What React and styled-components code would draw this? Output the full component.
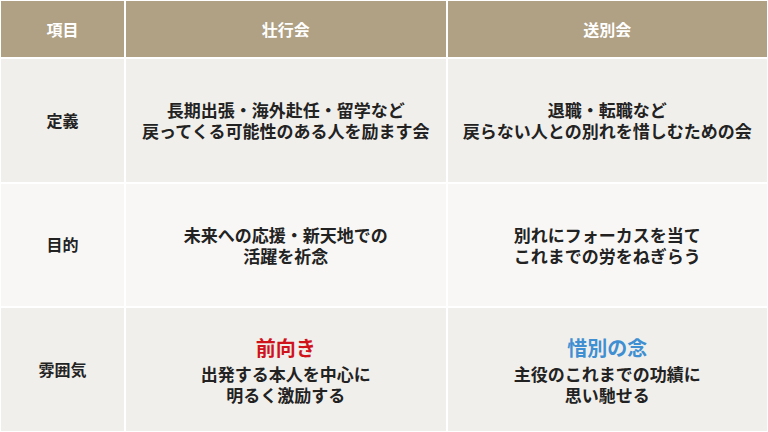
import React from 'react'
import styled, { createGlobalStyle } from 'styled-components'

const GlobalStyle = createGlobalStyle`
    html, body {
        margin: 0;
        padding: 0;
        background: #ffffff;
    }
    body {
        font-family: "Noto Sans CJK JP", "Noto Sans", sans-serif;
    }
`

const rows = [
    {
        label: '定義',
        left: { lines: ['長期出張・海外赴任・留学など', '戻ってくる可能性のある人を励ます会'] },
        right: { lines: ['退職・転職など', '戻らない人との別れを惜しむための会'] },
    },
    {
        label: '目的',
        left: { lines: ['未来への応援・新天地での', '活躍を祈念'] },
        right: { lines: ['別れにフォーカスを当て', 'これまでの労をねぎらう'] },
    },
    {
        label: '雰囲気',
        left: { accent: '前向き', tone: 'red', lines: ['出発する本人を中心に', '明るく激励する'] },
        right: { accent: '惜別の念', tone: 'blue', lines: ['主役のこれまでの功績に', '思い馳せる'] },
    },
]

const App = () => {
    return (
        <>
            <GlobalStyle />
            <Table>
                <HeadCell>項目</HeadCell>
                <HeadCell>壮行会</HeadCell>
                <HeadCell>送別会</HeadCell>
                {rows.map((row, i) => (
                    <React.Fragment key={row.label}>
                        <LabelCell $alt={i % 2 === 1}>{row.label}</LabelCell>
                        {[row.left, row.right].map((c, j) => (
                            <Cell key={j} $alt={i % 2 === 1}>
                                {c.accent && <Accent $tone={c.tone}>{c.accent}</Accent>}
                                <Text>
                                    {c.lines[0]}<br />{c.lines[1]}
                                </Text>
                            </Cell>
                        ))}
                    </React.Fragment>
                ))}
            </Table>
        </>
    )
}

export default App

const Table = styled.div`
    display: grid;
    grid-template-columns: 123px 1fr 1fr;
    grid-template-rows: 56px 1fr 1fr 1fr;
    gap: 2px;
    padding: 1px;
    height: 432px;
    box-sizing: border-box;
    background: #ffffff;
`

const HeadCell = styled.div`
    background: #b0a084;
    color: #ffffff;
    font-weight: bold;
    font-size: 16px;
    display: flex;
    align-items: center;
    justify-content: center;
`

const Cell = styled.div`
    background: ${p => p.$alt ? '#f8f7f5' : '#f1efeb'};
    color: #222222;
    font-weight: bold;
    font-size: 17px;
    line-height: 21px;
    display: flex;
    flex-direction: column;
    align-items: center;
    justify-content: center;
    text-align: center;
`

const LabelCell = styled(Cell)`
    font-size: 16px;
`

const Text = styled.p`
    margin: 0;
`

const Accent = styled.div`
    font-size: 20px;
    line-height: 26px;
    margin-bottom: 2px;
    color: ${p => p.$tone === 'red' ? '#d0121b' : '#3f8fd2'};
`
